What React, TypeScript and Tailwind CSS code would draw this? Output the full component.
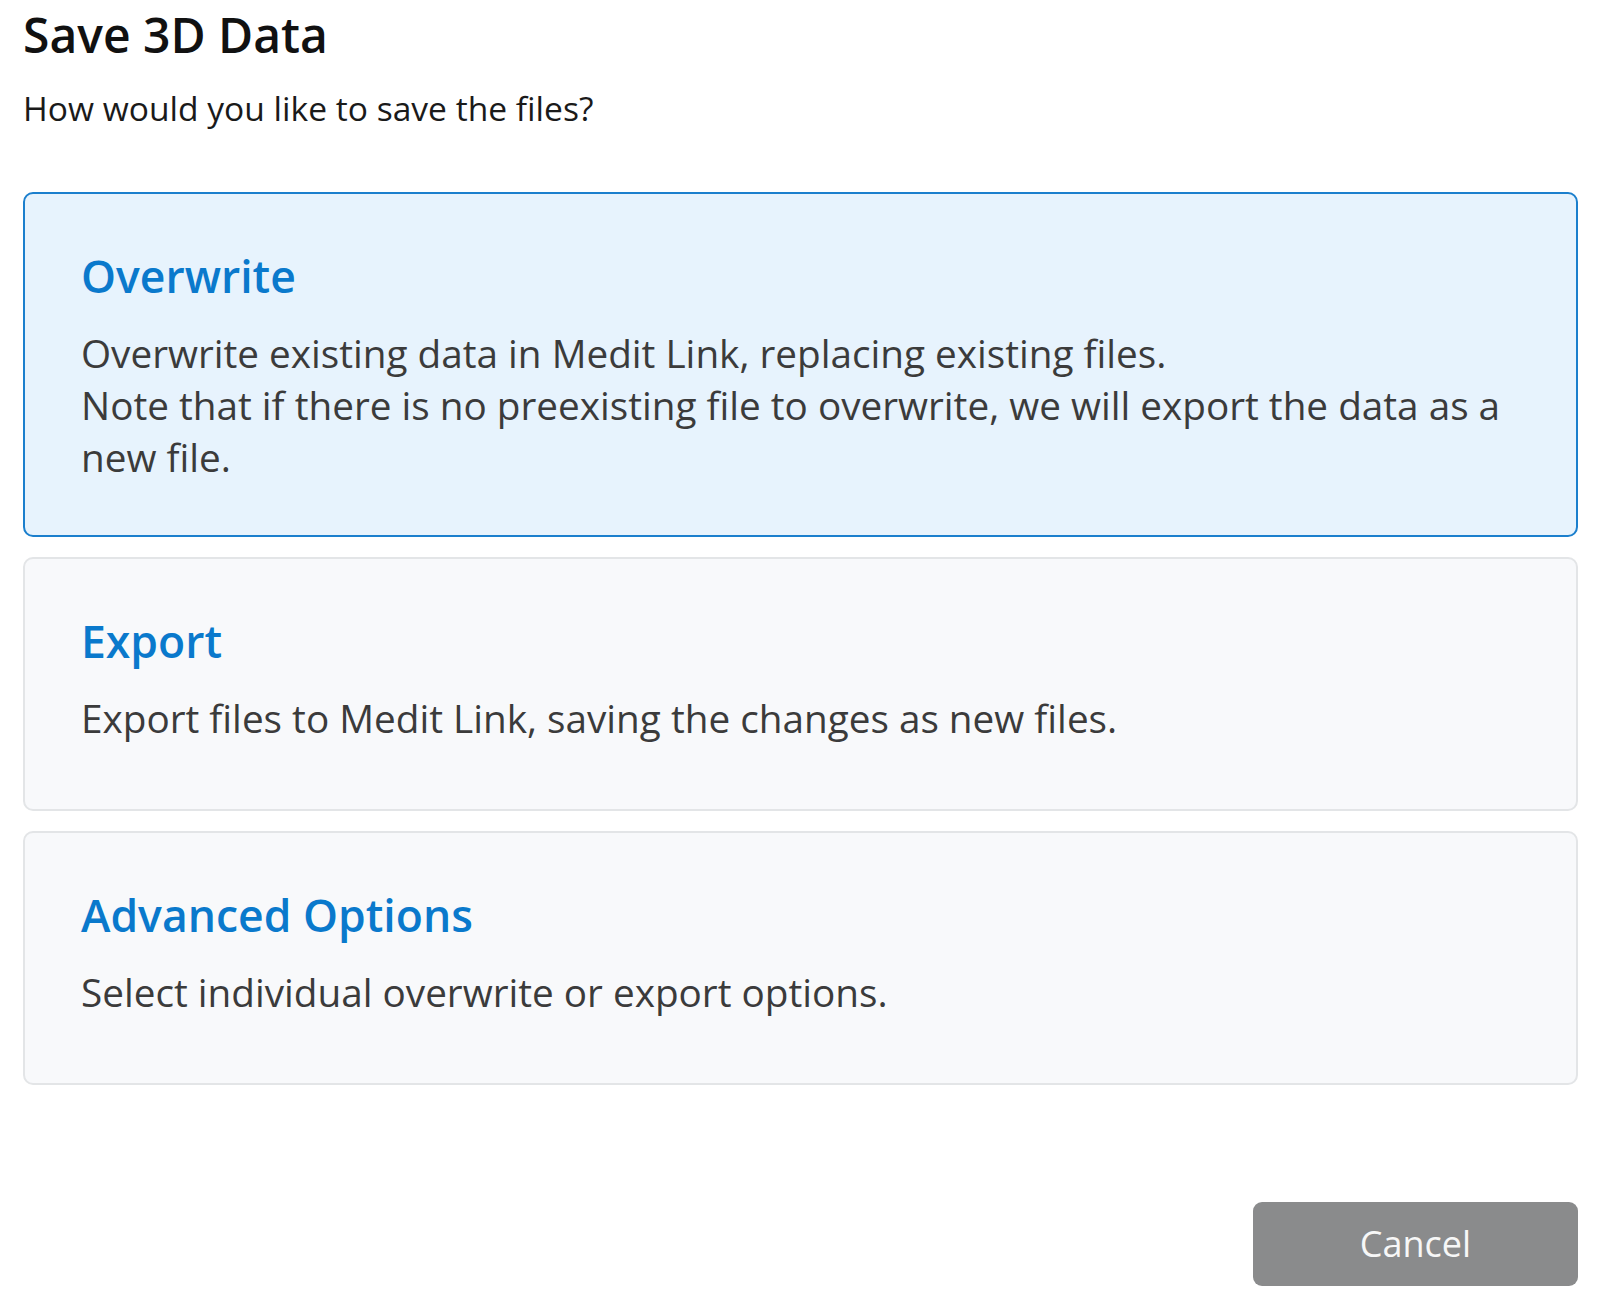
import * as React from "react";

type Choice = {
  key: string;
  title: string;
  lines: string[];
  selected?: boolean;
};

const CHOICES: Choice[] = [
  {
    key: "overwrite",
    title: "Overwrite",
    lines: [
      "Overwrite existing data in Medit Link, replacing existing files.",
      "Note that if there is no preexisting file to overwrite, we will export the data as a new file.",
    ],
    selected: true,
  },
  {
    key: "export",
    title: "Export",
    lines: ["Export files to Medit Link, saving the changes as new files."],
  },
  {
    key: "advanced",
    title: "Advanced Options",
    lines: ["Select individual overwrite or export options."],
  },
];

function ChoiceCard({ choice }: { choice: Choice }) {
  return (
    <button
      type="button"
      className={
        choice.selected
          ? "flex w-full flex-col rounded-[10px] border-2 border-[#1b7fcd] bg-[#e7f3fd] pb-[52px] pl-[56px] pr-[40px] pt-[52px] text-left"
          : "flex min-h-[254px] w-full flex-col rounded-[10px] border-2 border-[#e3e5e7] bg-[#f8f9fb] pb-[52px] pl-[56px] pr-[40px] pt-[52px] text-left"
      }
    >
      <span className="text-[44.5px] font-semibold leading-[60px] text-[#0a79cc]">
        {choice.title}
      </span>
      <span className="mt-[21px] text-[38.7px] leading-[52px] text-[#3b3b3b]">
        {choice.lines.map((line) => (
          <span key={line} className="block">
            {line}
          </span>
        ))}
      </span>
    </button>
  );
}

export default function App() {
  return (
    <div
      className="flex min-h-[1308px] w-[1610px] flex-col bg-white pb-[22px] pl-[23px] pr-[32px] pt-[3px]"
      style={{ fontFamily: '"Open Sans", "Noto Sans", sans-serif' }}
    >
      <h1 className="text-[48px] font-semibold leading-[64px] text-[#111111]">
        Save 3D Data
      </h1>
      <p className="mt-[19px] text-[33.6px] leading-[44px] text-[#1a1a1a]">
        How would you like to save the files?
      </p>

      <div className="mt-[62px] flex flex-col gap-[20px]">
        {CHOICES.map((c) => (
          <ChoiceCard key={c.key} choice={c} />
        ))}
      </div>

      <div className="mt-auto flex justify-end">
        <button
          type="button"
          className="flex h-[84px] w-[325px] items-center justify-center rounded-[9px] bg-[#8a8b8c] text-[36px] text-[#f7f7f7]"
        >
          Cancel
        </button>
      </div>
    </div>
  );
}
